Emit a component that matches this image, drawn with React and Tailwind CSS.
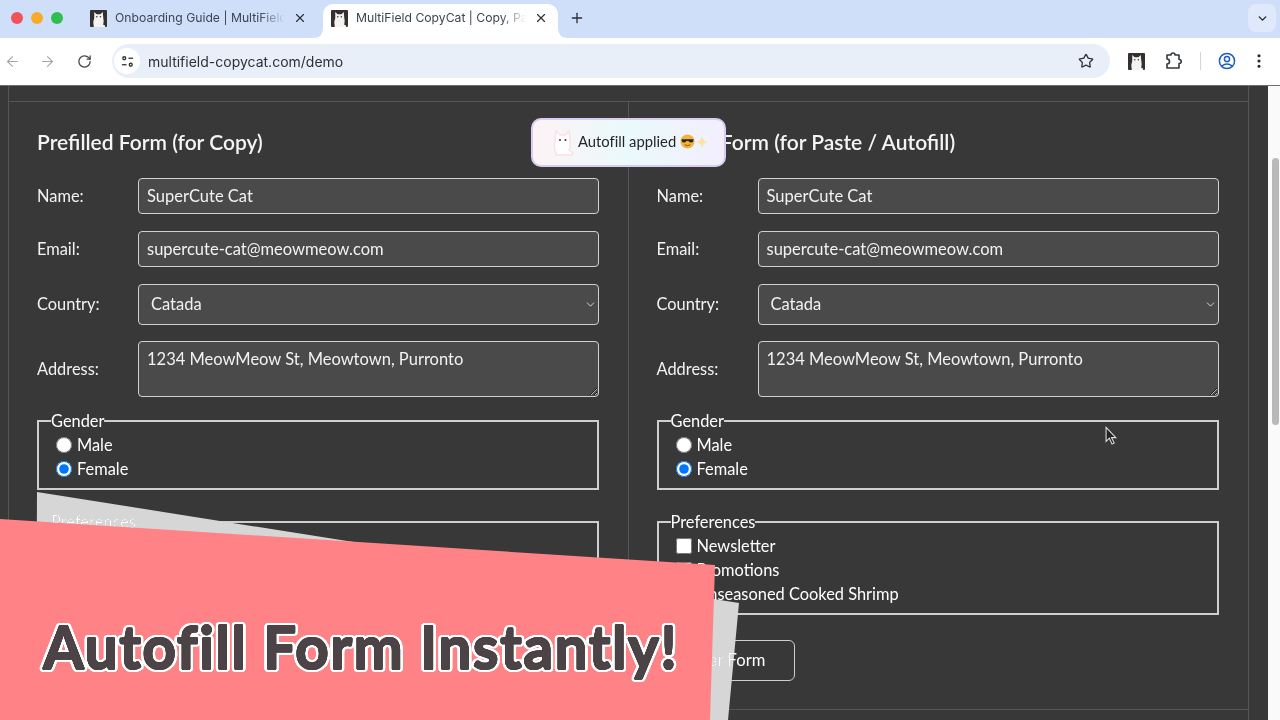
import { ArrowLeft, ArrowRight, ChevronDown, EllipsisVertical, Plus, RotateCw, Star, X } from "lucide-react";

const BODY_FONT = "font-['Lato','Noto_Sans',sans-serif]";

// round outline for the headline, dark ring first so it sits above the white one
const ring = (r, color, steps) =>
  Array.from({ length: steps }, (_, i) => {
    const a = (i / steps) * Math.PI * 2;
    return `${(Math.cos(a) * r).toFixed(2)}px ${(Math.sin(a) * r).toFixed(2)}px 0 ${color}`;
  }).join(",");
const headlineShadow = [ring(0.6, "#4b4345", 12), ring(2.2, "#ffffff", 24), ring(3.2, "#ffffff", 24)].join(",");

function CatIcon({ className }) {
  return (
    <svg viewBox="0 0 18 18" className={className}>
      <rect width="18" height="18" rx="1" fill="#33302f" />
      <path d="M4.5 2 L7 4.5 H11 L13.5 2 L14 8 Q15 12 14 15.5 L16 16.5 V18 H4 Q2.5 13 4.5 8.5 Z" fill="#f4f3f1" />
      <circle cx="7.2" cy="7.2" r="0.8" fill="#33302f" />
      <circle cx="11" cy="7.2" r="0.8" fill="#33302f" />
    </svg>
  );
}

function Tab({ title, active }) {
  return (
    <div className={`relative flex items-center w-[235px] h-[34px] pb-[6px] pr-[10px] gap-[8px] rounded-t-[10px] ${active ? "bg-white ml-[-1px] pl-[8px]" : "bg-transparent pl-[6px]"}`}>
      {active && (
        <svg viewBox="0 0 10 10" className="absolute bottom-0 left-[-10px] w-[10px] h-[10px]">
          <path d="M10 0 V10 H0 Q10 10 10 0 Z" fill="#fff" />
        </svg>
      )}
      {active && (
        <svg viewBox="0 0 10 10" className="absolute bottom-0 right-[-10px] w-[10px] h-[10px]">
          <path d="M0 0 V10 H10 Q0 10 0 0 Z" fill="#fff" />
        </svg>
      )}
      <CatIcon className="w-[17px] h-[17px] shrink-0" />
      <span className="flex-1 overflow-hidden whitespace-nowrap text-[12.2px] text-[#3d4450] [mask-image:linear-gradient(to_right,black_85%,transparent)]">
        {title}
      </span>
      <X size={14} strokeWidth={2} className={`text-[#2c3038] shrink-0 ${active ? "" : "mr-[2px]"}`} />
    </div>
  );
}

function BrowserChrome() {
  return (
    <header className="font-['Inter','Liberation_Sans',sans-serif]">
      <div className="flex items-end h-[38px] bg-[#cfdffa]">
        <div className="flex items-center gap-[8px] w-[84px] h-[34px] pl-[11px] pb-[6px]">
          <span className="w-[12px] h-[12px] rounded-full bg-[#f4525a]" />
          <span className="w-[12px] h-[12px] rounded-full bg-[#f6ab2a]" />
          <span className="w-[12px] h-[12px] rounded-full bg-[#2fbf4c]" />
        </div>
        <Tab title="Onboarding Guide | MultiField CopyCat" />
        <div className="w-[5px]" />
        <Tab title="MultiField CopyCat | Copy, Paste" active />
        <Plus size={16} strokeWidth={2} className="ml-[11px] mb-[12px] text-[#2c3038]" />
        <div className="flex-1" />
        <div className="flex items-center justify-center w-[28px] h-[28px] mb-[6px] mr-[4px] rounded-[8px] bg-[#dfe9fb]">
          <ChevronDown size={13} strokeWidth={2.5} className="text-[#22262c]" />
        </div>
      </div>
      <div className="flex items-center h-[48px] pb-[1px] bg-white border-b border-[#6d6d6d]">
        <div className="flex items-center w-[112px] pl-[4px]">
          <ArrowLeft size={17} strokeWidth={1.5} className="text-[#a3a7ad]" />
          <ArrowRight size={17} strokeWidth={1.5} className="ml-[18px] text-[#a3a7ad]" />
          <RotateCw size={15} strokeWidth={2} className="ml-[21px] text-[#3e4248]" />
        </div>
        <div className="flex items-center w-[998px] h-[34px] rounded-full bg-[#e9eff8] pl-[2px] pr-[16px]">
          <div className="flex items-center justify-center w-[26px] h-[26px] rounded-full bg-white">
            <svg viewBox="0 0 14 14" className="w-[13px] h-[13px]" fill="none" stroke="#30343a" strokeWidth="1.4">
              <circle cx="3.5" cy="3.5" r="1.6" />
              <path d="M8 3.5 H13" />
              <path d="M1 10.5 H6" />
              <circle cx="10.5" cy="10.5" r="1.6" />
            </svg>
          </div>
          <span className="ml-[8px] flex-1 text-[14px] text-[#2d3036]">multifield-copycat.com/demo</span>
          <Star size={16} strokeWidth={2} className="text-[#33373d]" />
        </div>
        <CatIcon className="ml-[18px] w-[17px] h-[17px]" />
        <svg viewBox="0 0 18 18" className="ml-[19px] w-[18px] h-[18px]" fill="none" stroke="#33373d" strokeWidth="1.6" strokeLinejoin="round">
          <path d="M3 3 H7 Q7 1 9 1 Q11 1 11 3 H15 V7.5 Q17.2 7.5 17.2 9.5 Q17.2 11.5 15 11.5 V16 H3 V12 Q5.5 12 5.5 9.5 Q5.5 7 3 7 Z" />
        </svg>
        <div className="ml-[18px] w-px h-[18px] bg-[#cfd6e0]" />
        <svg viewBox="0 0 18 18" className="ml-[17px] w-[18px] h-[18px]" fill="none" stroke="#1f5fbf" strokeWidth="1.5">
          <circle cx="9" cy="9" r="7.6" />
          <circle cx="9" cy="7" r="2.6" />
          <path d="M3.8 14 Q9 9.8 14.2 14" />
        </svg>
        <EllipsisVertical size={18} strokeWidth={2.2} className="ml-[14px] text-[#25282d]" />
      </div>
    </header>
  );
}

const fieldClass = "flex-1 min-w-0 rounded-[4px] border border-[#d0d0d0] bg-[#4a4a4a] px-2 text-[16.5px] text-[#f2f2f2] outline-none";

function Row({ label, children }) {
  return (
    <div className="flex items-center">
      <label className="w-[101px] text-[16.4px] text-[#f2f2f2]">{label}</label>
      {children}
    </div>
  );
}

function FormColumn({ id, title, withButton }) {
  return (
    <section className={`flex flex-col pl-[28px] pr-[29px] ${id === "paste" ? "" : "border-r border-[#555]"}`}>
      <h2 className="mt-[26px] h-[28px] text-[21px] leading-[28px] font-semibold text-[#f4f4f4] whitespace-nowrap">{title}</h2>
      <div className="mt-[22px] flex flex-col">
        <Row label="Name:">
          <input className={`${fieldClass} h-[36px]`} defaultValue="SuperCute Cat" />
        </Row>
        <div className="h-[17px]" />
        <Row label="Email:">
          <input className={`${fieldClass} h-[36px]`} defaultValue="supercute-cat@meowmeow.com" />
        </Row>
        <div className="h-[17px]" />
        <Row label="Country:">
          <div className="relative flex flex-1 min-w-0">
            <select className={`${fieldClass} h-[41px] appearance-none pl-[12px]`} defaultValue="Catada">
              <option>Catada</option>
            </select>
            <ChevronDown size={13} strokeWidth={1.5} className="absolute right-[2px] top-[14px] text-[#f2f2f2]" />
          </div>
        </Row>
        <div className="h-[16px]" />
        <Row label="Address:">
          <textarea className={`${fieldClass} h-[56px] py-[5px] leading-[24px]`} defaultValue="1234 MeowMeow St, Meowtown, Purronto" />
        </Row>
      </div>
      <fieldset className="mt-[12px] h-[81px] border-2 border-[#cfcfcf] px-[12px] text-[16.4px] text-white">
        <legend className="leading-[24px]">Gender</legend>
        <label className="flex items-center gap-[5px] h-[24px] pl-[5px]">
          <input type="radio" name={`${id}-gender`} className="w-4 h-4 m-0" />
          Male
        </label>
        <label className="flex items-center gap-[5px] h-[24px] pl-[5px]">
          <input type="radio" name={`${id}-gender`} className="w-4 h-4 m-0" defaultChecked />
          Female
        </label>
      </fieldset>
      <fieldset className="mt-[20px] h-[105px] border-2 border-[#cfcfcf] px-[12px] text-[16.4px] text-white">
        <legend className="leading-[24px]">Preferences</legend>
        <label className="flex items-center gap-[5px] h-[24px] pl-[5px]">
          <input type="checkbox" className="w-4 h-4 m-0" />
          Newsletter
        </label>
        <label className="flex items-center gap-[5px] h-[24px] pl-[5px]">
          <input type="checkbox" className="w-4 h-4 m-0" />
          Promotions
        </label>
        <label className="flex items-center gap-[5px] h-[24px] pl-[5px]">
          <input type="checkbox" className="w-4 h-4 m-0" />
          Unseasoned Cooked Shrimp
        </label>
      </fieldset>
      {withButton && (
        <button className="mt-[25px] w-[138px] h-[41px] rounded-[6px] border border-[#cfcfcf] text-[16.6px] text-white">
          Clear Form
        </button>
      )}
    </section>
  );
}

function Toast() {
  return (
    <div className="absolute left-[531px] top-[118px] flex items-center w-[195px] h-[49px] pl-[18px] pb-[2px] rounded-[10px] border-2 border-[#d8cdf0] bg-gradient-to-r from-[#fdf3f5] via-[#eafafb] to-[#f3eefe] text-[14.8px] text-[#26262a] [font-variant-ligatures:none]">
      <svg viewBox="0 0 24 28" className="w-[24px] h-[28px] shrink-0">
        <path d="M5 3 L9 7 H14 L18 3 L19 12 Q20 18 18 22 L22 25 Q22 27 19 27 H6 Q2 20 4 12 Z" fill="#ffffff" stroke="#fbdfe6" strokeWidth="1.5" />
        <circle cx="9" cy="12" r="1" fill="#33302f" />
        <circle cx="14.5" cy="12" r="1" fill="#33302f" />
      </svg>
      <span className="ml-[3px] whitespace-nowrap">Autofill applied</span>
      <svg viewBox="0 0 16 16" className="ml-[4px] w-[15px] h-[15px] shrink-0">
        <circle cx="8" cy="8" r="7.5" fill="#f2b53c" />
        <path d="M1.5 5.5 H14.5 L13.8 8.6 Q11 10 9 7.5 H7 Q5 10 2.2 8.6 Z" fill="#2b2622" />
        <path d="M5 11.5 Q8 13.5 11 11.5" stroke="#7a4a1c" strokeWidth="1" fill="none" />
      </svg>
      <svg viewBox="0 0 16 16" className="w-[14px] h-[14px] shrink-0">
        <path d="M8 1 Q8.8 7 15 8 Q8.8 9 8 15 Q7.2 9 1 8 Q7.2 7 8 1 Z" fill="#fbe4a0" />
      </svg>
    </div>
  );
}

export default function App() {
  return (
    <div className={`relative w-[1280px] h-[720px] overflow-hidden bg-white ${BODY_FONT}`}>
      <BrowserChrome />
      <main className="flex h-[634px]">
        <div className="flex-1 bg-[#383838] pl-[8px] pr-[19px]">
          <div className="h-full border-x border-[#555]">
            <div className="h-[16px] border-b border-[#555]" />
            <div className="grid grid-cols-2 h-[608px] border-b border-[#555]">
              <FormColumn id="copy" title="Prefilled Form (for Copy)" />
              <FormColumn id="paste" title="Empty Form (for Paste / Autofill)" withButton />
            </div>
          </div>
        </div>
        <div className="w-[12px] bg-[#fafafa] pl-[4px] pr-[1px] pt-[72px]">
          <div className="h-[267px] rounded-full bg-[#b9b9b9]" />
        </div>
      </main>

      <Toast />

      {/* mouse pointer */}
      <svg viewBox="0 0 12 18" className="absolute left-[1105px] top-[426px] w-[13px] h-[20px]">
        <path d="M1 1 V14 L4 11 L6.5 16.5 L8.5 15.5 L6 10.5 H10 Z" fill="#222" stroke="#ddd" strokeWidth="1" />
      </svg>

      {/* video title card */}
      <div className="absolute inset-0 bg-[#d6d6d6] mix-blend-lighten [clip-path:polygon(37px_492px,739px_603px,728px_720px,36px_720px)]" />
      <div className="absolute inset-0 bg-[#ff8386] [clip-path:polygon(0px_519px,715px_565px,710px_720px,0px_720px)]" />
      <h1
        className="absolute left-[43px] top-[609px] text-[59px] leading-[76px] tracking-[1.3px] font-bold text-[#4b4345] whitespace-nowrap"
        style={{ textShadow: headlineShadow }}
      >
        Autofill Form Instantly!
      </h1>
    </div>
  );
}
